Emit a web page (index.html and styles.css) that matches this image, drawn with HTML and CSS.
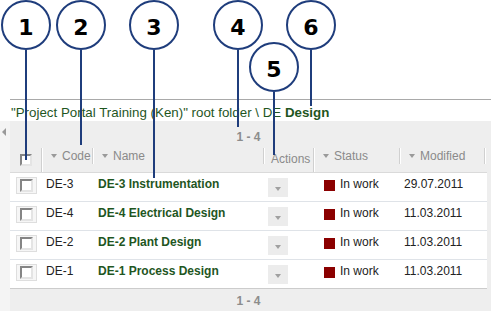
FILE: index.html
```html
<!DOCTYPE html>
<html lang="en">
<head>
    <meta charset="UTF-8">
    <title>Project Portal - DE Design</title>
    <link rel="stylesheet" href="styles.css">
</head>
<body>
    <div class="page">
        <div class="top-space"></div>
        <div class="crumb">"Project Portal Training (Ken)" root folder \ DE <b>Design</b></div>
        <div class="panel">
            <div class="splitter"><span class="collapse"></span></div>
            <div class="grid-area">
                <div class="pager">1 - 4</div>
                <div class="grid-head">
                    <div class="hcell col-check"><span class="cb cb-head"></span></div>
                    <div class="hcell col-code"><span class="sort"></span>Code</div>
                    <div class="hcell col-name"><span class="sort"></span>Name</div>
                    <div class="hcell col-actions">Actions</div>
                    <div class="hcell col-status"><span class="sort"></span>Status</div>
                    <div class="hcell col-modified"><span class="sort"></span>Modified</div>
                </div>
                <div class="row">
                    <div class="cell col-check"><span class="cb-frame"><span class="cb"></span></span></div>
                    <div class="cell col-code">DE-3</div>
                    <div class="cell col-name"><a class="doc-link">DE-3 Instrumentation</a></div>
                    <div class="cell col-actions"><span class="act"><span class="act-arrow"></span></span></div>
                    <div class="cell col-status"><span class="state"></span>In work</div>
                    <div class="cell col-modified">29.07.2011</div>
                </div>
                <div class="row">
                    <div class="cell col-check"><span class="cb-frame"><span class="cb"></span></span></div>
                    <div class="cell col-code">DE-4</div>
                    <div class="cell col-name"><a class="doc-link">DE-4 Electrical Design</a></div>
                    <div class="cell col-actions"><span class="act"><span class="act-arrow"></span></span></div>
                    <div class="cell col-status"><span class="state"></span>In work</div>
                    <div class="cell col-modified">11.03.2011</div>
                </div>
                <div class="row">
                    <div class="cell col-check"><span class="cb-frame"><span class="cb"></span></span></div>
                    <div class="cell col-code">DE-2</div>
                    <div class="cell col-name"><a class="doc-link">DE-2 Plant Design</a></div>
                    <div class="cell col-actions"><span class="act"><span class="act-arrow"></span></span></div>
                    <div class="cell col-status"><span class="state"></span>In work</div>
                    <div class="cell col-modified">11.03.2011</div>
                </div>
                <div class="row row-last">
                    <div class="cell col-check"><span class="cb-frame"><span class="cb"></span></span></div>
                    <div class="cell col-code">DE-1</div>
                    <div class="cell col-name"><a class="doc-link">DE-1 Process Design</a></div>
                    <div class="cell col-actions"><span class="act"><span class="act-arrow"></span></span></div>
                    <div class="cell col-status"><span class="state"></span>In work</div>
                    <div class="cell col-modified">11.03.2011</div>
                </div>
                <div class="pager pager-bottom">1 - 4</div>
            </div>
        </div>

        <!-- numbered callouts drawn over the screenshot -->
        <svg class="callouts" width="491" height="311" viewBox="0 0 491 311">
            <line x1="26" y1="50" x2="26" y2="160"/>
            <line x1="81" y1="50" x2="81" y2="145"/>
            <line x1="154" y1="50" x2="154" y2="178"/>
            <line x1="238" y1="50" x2="238" y2="127"/>
            <line x1="274" y1="92" x2="274" y2="155"/>
            <line x1="311" y1="50" x2="311" y2="106"/>
            <circle cx="26" cy="25" r="24"/>
            <circle cx="81" cy="25" r="24"/>
            <circle cx="154" cy="25" r="24"/>
            <circle cx="238" cy="25" r="24"/>
            <circle cx="274" cy="67" r="24"/>
            <circle cx="311" cy="25" r="24"/>
            <text x="26" y="35">1</text>
            <text x="81" y="35">2</text>
            <text x="154" y="35">3</text>
            <text x="238" y="35">4</text>
            <text x="274" y="77">5</text>
            <text x="311" y="35">6</text>
        </svg>
    </div>
</body>
</html>
```

FILE: styles.css
```css
body {
    margin: 0;
    font-family: "Liberation Sans", Arial, sans-serif;
    background: #fff;
    color: #222;
}

.page {
    position: relative;
    width: 491px;
    height: 311px;
    overflow: hidden;
}

.top-space {
    height: 99px;
}

.crumb {
    box-sizing: border-box;
    height: 22px;
    margin-left: 10px;
    padding: 5px 0 0 1px;
    border-top: 1px solid #a9a9a9;
    font-size: 13.33px;
    line-height: 15px;
    color: #1f561f;
    white-space: nowrap;
}

.panel {
    display: flex;
    height: 190px;
    background: #eeeeee;
}

.splitter {
    width: 10px;
    background: #f4f4f4;
}

.collapse {
    display: block;
    width: 0;
    height: 0;
    margin: 7px 0 0 2px;
    border-top: 4px solid transparent;
    border-bottom: 4px solid transparent;
    border-right: 4px solid #9a9a9a;
}

.grid-area {
    width: 477px;
}

.pager {
    box-sizing: border-box;
    height: 27px;
    padding-top: 9px;
    text-align: center;
    font-size: 12px;
    line-height: 14px;
    font-weight: bold;
    color: #8c8c8c;
}

.pager-bottom {
    height: 22px;
    padding-top: 5px;
}

/* header */
.grid-head {
    box-sizing: border-box;
    display: flex;
    align-items: flex-start;
    height: 25px;
    border-bottom: 1px solid #dadada;
}

.hcell {
    box-sizing: border-box;
    display: flex;
    align-items: center;
    height: 16px;
    padding-left: 9px;
    border-right: 1px solid #d0d0d0;
    box-shadow: 1px 0 0 #fff;
    font-size: 12px;
    line-height: 14px;
    color: #8a8a8a;
}

.sort {
    width: 0;
    height: 0;
    margin-right: 5px;
    border-left: 3.5px solid transparent;
    border-right: 3.5px solid transparent;
    border-top: 4px solid #9a9a9a;
}

.col-check { width: 32px; }
.col-code { width: 51px; }
.col-name { width: 171px; }
.col-actions { width: 50px; }
.col-status { width: 86px; }
.col-modified { width: 85px; }

.hcell.col-check {
    align-items: flex-start;
    height: 24px;
    padding: 6px 0 0 10px;
}

.hcell.col-actions {
    align-items: flex-start;
    height: 24px;
    padding: 4px 0 0 7px;
}

.cb {
    box-sizing: border-box;
    display: block;
    width: 12px;
    height: 12px;
    background: #fff;
    border: 2px solid;
    border-color: #858585 #e4e4e4 #e4e4e4 #858585;
}

.cb-frame {
    display: block;
    padding: 1px 3px;
    border: 1px solid #dedede;
    background: #f6f6f6;
}

.cb-frame .cb {
    width: 13px;
    height: 13px;
}

/* rows */
.row {
    box-sizing: border-box;
    display: flex;
    align-items: flex-start;
    height: 29px;
    padding-top: 4px;
    background: #fff;
    border-bottom: 1px solid #dfe3e8;
    font-size: 12px;
    line-height: 14px;
}

.row-last {
    border-bottom-color: #cccccc;
}

.cell {
    box-sizing: border-box;
    display: flex;
    align-items: center;
    white-space: nowrap;
}

.cell.col-check { padding-left: 6px; }
.cell.col-code { padding-left: 4px; }
.cell.col-name { padding-left: 5px; }
.cell.col-actions { padding-left: 4px; }
.cell.col-status { padding-left: 10px; }
.cell.col-modified { padding-left: 4px; }

.doc-link {
    font-weight: bold;
    color: #1f561f;
}

.act {
    display: flex;
    justify-content: center;
    align-items: center;
    width: 20px;
    height: 19px;
    margin-top: 1px;
    background: #ececec;
}

.act-arrow {
    width: 0;
    height: 0;
    margin-top: 2px;
    border-left: 3.5px solid transparent;
    border-right: 3.5px solid transparent;
    border-top: 4px solid #a0a0a0;
}

.state {
    width: 11px;
    height: 11px;
    margin: 2px 5px 0 0;
    background: #8b0000;
}

/* callouts */
.callouts {
    position: absolute;
    top: 0;
    left: 0;
    pointer-events: none;
}

.callouts line {
    stroke: #1f3d7c;
    stroke-width: 2;
}

.callouts circle {
    fill: #fff;
    stroke: #1f3d7c;
    stroke-width: 2;
}

.callouts text {
    font-family: "DejaVu Sans", sans-serif;
    font-size: 22px;
    font-weight: bold;
    text-anchor: middle;
    fill: #000;
}
```
